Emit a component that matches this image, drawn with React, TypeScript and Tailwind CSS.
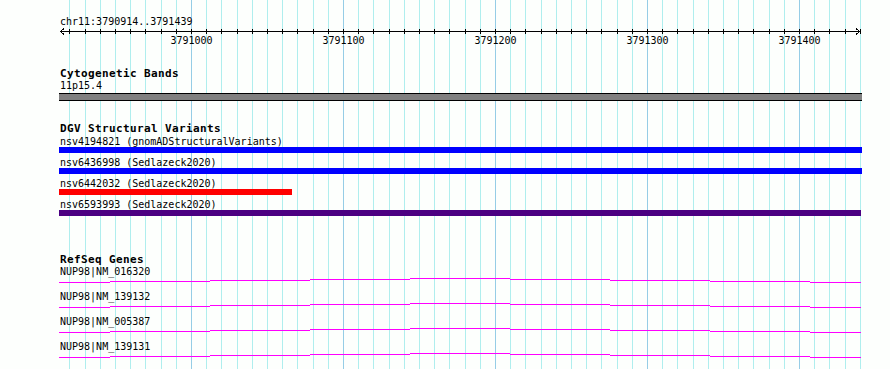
import React from "react";

const mono = "font-['DejaVu_Sans_Mono',monospace]";

// grid x (relative to track panel left edge) for the j-th 10bp step from 3791000
const gx = (j: number) => Math.round(132 + 15.2 * j);
const STEPS = Array.from({ length: 53 }, (_, i) => i - 8);
const MAJORS = [0, 10, 20, 30, 40];

const variants = [
  { name: "nsv4194821 (gnomADStructuralVariants)", color: "bg-[#0000ff]", w: "w-[803px]" },
  { name: "nsv6436998 (Sedlazeck2020)", color: "bg-[#0000ff]", w: "w-[803px]" },
  { name: "nsv6442032 (Sedlazeck2020)", color: "bg-[#ff0000]", w: "w-[233px]" },
  { name: "nsv6593993 (Sedlazeck2020)", color: "bg-[#4b0082]", w: "w-[802px]" },
];

const genes = ["NUP98|NM_016320", "NUP98|NM_139132", "NUP98|NM_005387", "NUP98|NM_139131"];

// intron hat drawn as stepped 1px segments: [from, to, rise]
const hat: [number, number, number][] = [
  [0, 51, 0],
  [51, 151, 1],
  [151, 251, 2],
  [251, 351, 3],
  [351, 451, 4],
  [451, 551, 3],
  [551, 651, 2],
  [651, 751, 1],
  [751, 802, 0],
];

function Grid() {
  return (
    <svg className="absolute left-0 top-0" width={803} height={369} shapeRendering="crispEdges">
      {STEPS.map((j) => (
        <rect key={j} x={gx(j)} y={0} width={1} height={369} fill={j % 10 === 0 ? "#96cde6" : "#afeeee"} />
      ))}
    </svg>
  );
}

function Ruler() {
  return (
    <div className="relative h-[24px]">
      <svg className="absolute left-0 top-0" width={803} height={10} shapeRendering="crispEdges">
        <rect x={1} y={4} width={800} height={1} fill="#000" />
        {STEPS.map((j) => (
          <rect key={j} x={gx(j)} y={2} width={1} height={5} fill="#000" />
        ))}
        <path d="M5 1.5 L1.5 4.5 L5 7.5" fill="none" stroke="#000" strokeWidth={1} />
        <path d="M797 1.5 L800.5 4.5 L797 7.5" fill="none" stroke="#000" strokeWidth={1} />
      </svg>
      {MAJORS.map((j) => (
        <span
          key={j}
          className="absolute top-[8px] -translate-x-1/2 text-[10px] leading-[12px] text-black"
          style={{ left: gx(j) + 0.5 }}
        >
          {3791000 + j * 10}
        </span>
      ))}
    </div>
  );
}

function TrackTitle({ children, className = "" }: { children: React.ReactNode; className?: string }) {
  return (
    <h2 className={`pl-[1px] text-[11px] font-bold leading-[12px] tracking-[0.38px] text-black ${className}`}>
      {children}
    </h2>
  );
}

function GeneRow({ label }: { label: string }) {
  return (
    <div className="flex flex-col">
      <span className="h-[11px] pl-[1px] text-[10px] leading-[11px] text-black">{label}</span>
      <svg width={803} height={14} shapeRendering="crispEdges">
        {hat.map(([a, b, r]) => (
          <rect key={a} x={a} y={5 - r} width={b - a} height={1} fill="#ff00ff" />
        ))}
      </svg>
    </div>
  );
}

export default function App() {
  return (
    <div className={`h-[369px] w-[890px] overflow-hidden bg-[#fdfffd] ${mono}`}>
      <div className="relative ml-[59px] h-[369px] w-[803px]">
        <Grid />
        <div className="relative flex flex-col">
          <div className="h-[27px] pl-[1px] pt-[16px] text-[10px] leading-[11px] text-black">chr11:3790914..3791439</div>
          <Ruler />

          <TrackTitle className="mt-[17px]">Cytogenetic Bands</TrackTitle>
          <div className="pl-[1px] text-[10px] leading-[12px] text-black">11p15.4</div>
          <div className="mt-[1px] h-[8px] w-[803px] border-y border-black bg-[#808080]" />

          <TrackTitle className="mt-[22px]">DGV Structural Variants</TrackTitle>
          <div className="mt-[1px] flex flex-col gap-[4px]">
            {variants.map((v) => (
              <div key={v.name} className="flex flex-col">
                <span className="h-[11px] pl-[1px] text-[10px] leading-[11px] text-black">{v.name}</span>
                <div className={`h-[6px] ${v.w} ${v.color}`} />
              </div>
            ))}
          </div>

          <TrackTitle className="mt-[38px]">RefSeq Genes</TrackTitle>
          <div className="flex flex-col">
            {genes.map((g) => (
              <GeneRow key={g} label={g} />
            ))}
          </div>
        </div>
      </div>
    </div>
  );
}
